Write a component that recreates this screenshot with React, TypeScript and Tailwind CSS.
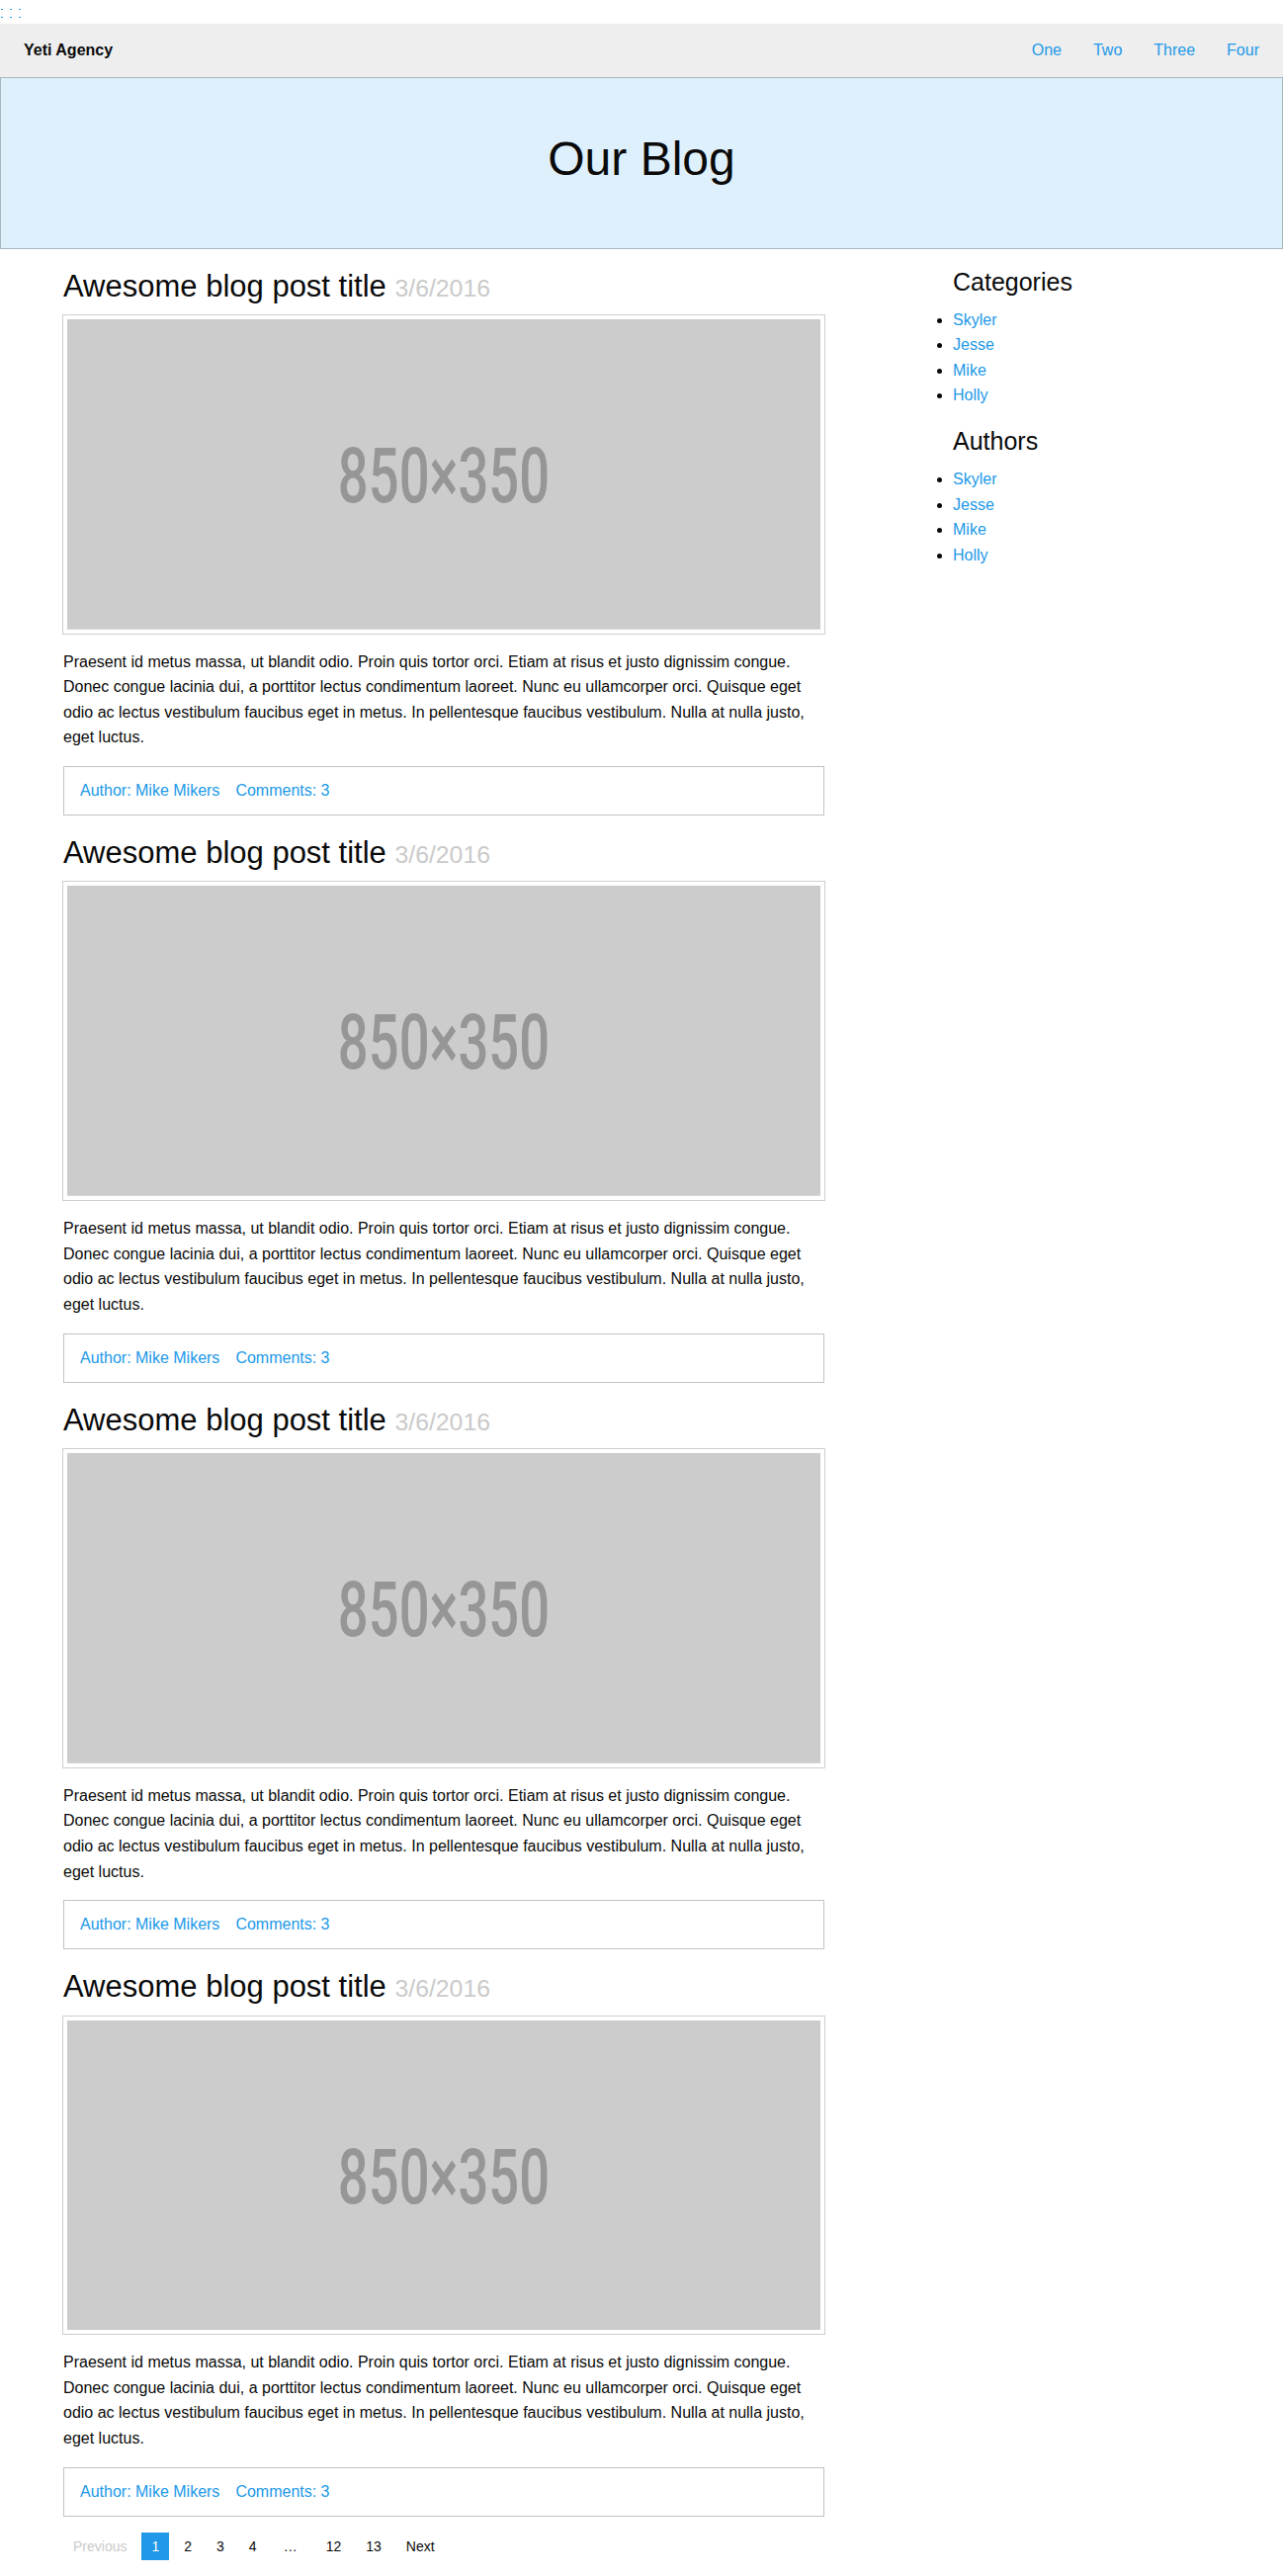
const navLinks = ['One', 'Two', 'Three', 'Four']
const people = ['Skyler', 'Jesse', 'Mike', 'Holly']
const pages = ['1', '2', '3', '4', '…', '12', '13']

function Placeholder() {
	return (
		<svg viewBox="0 0 850 350" className="block w-full h-auto">
			<rect width="850" height="350" fill="#cccccc" />
			<text
				x="425"
				y="206"
				textAnchor="middle"
				fontSize="87"
				fontFamily="Roboto, 'Liberation Sans', sans-serif"
				fontWeight="500"
				fill="#969696"
				textLength="239"
				lengthAdjust="spacingAndGlyphs"
			>
				850×350
			</text>
		</svg>
	)
}

function Post() {
	return (
		<article>
			<h3 className="text-[31px] leading-[1.4] mb-2 font-normal">
				Awesome blog post title{' '}
				<small className="text-[80%] leading-none text-[#cacaca]">3/6/2016</small>
			</h3>
			<div className="block border-4 border-white shadow-[0_0_0_1px_rgba(10,10,10,0.2)] mb-4">
				<Placeholder />
			</div>
			<p className="text-base leading-[1.6] mb-4">
				Praesent id metus massa, ut blandit odio. Proin quis tortor orci. Etiam at risus et justo dignissim
				congue. Donec congue lacinia dui, a porttitor lectus condimentum laoreet. Nunc eu ullamcorper orci.
				Quisque eget odio ac lectus vestibulum faucibus eget in metus. In pellentesque faucibus vestibulum.
				Nulla at nulla justo, eget luctus.
			</p>
			<div className="border border-[rgba(10,10,10,0.25)] p-4 mb-4">
				<ul className="flex leading-none">
					<li className="mr-4">
						<a className="text-[#2199e8]">Author: Mike Mikers</a>
					</li>
					<li className="mr-4">
						<a className="text-[#2199e8]">Comments: 3</a>
					</li>
				</ul>
			</div>
		</article>
	)
}

function SideList({ title }: { title: string }) {
	return (
		<div>
			<h4 className="text-[25px] leading-[1.4] mb-2">{title}</h4>
			<ul className="list-disc mb-4 leading-[1.6]">
				{people.map((p) => (
					<li key={p}>
						<a className="text-[#2199e8]">{p}</a>
					</li>
				))}
			</ul>
		</div>
	)
}

export default function App() {
	return (
		<div className="bg-white text-[#0a0a0a] font-['Liberation_Sans',Arial,sans-serif]">
			<div className="h-6 pt-[9px] pl-px flex flex-col gap-[7px]">
				{[0, 1].map((r) => (
					<div key={r} className="flex gap-[7px]">
						<span className="w-[2px] h-px bg-[#2199e8]" />
						<span className="w-[2px] h-px bg-[#2199e8]" />
						<span className="w-[2px] h-px bg-[#2199e8]" />
					</div>
				))}
			</div>

			<nav className="flex items-center justify-between bg-[#eeeeee] p-2">
				<span className="font-bold px-4 py-[0.7rem] leading-none">Yeti Agency</span>
				<ul className="flex">
					{navLinks.map((l) => (
						<li key={l}>
							<a className="block px-4 py-[0.7rem] leading-none text-[#2199e8]">{l}</a>
						</li>
					))}
				</ul>
			</nav>

			<div className="bg-[#def0fc] border border-[rgba(10,10,10,0.25)] py-12 mb-4">
				<h1 className="text-center text-[48px] leading-[1.4] mb-2">Our Blog</h1>
			</div>

			<div className="max-w-[1200px] mx-auto flex items-start">
				<div className="w-[800px] px-[15px]">
					<Post />
					<Post />
					<Post />
					<Post />
					<ul className="flex gap-[5px] text-[14px] leading-[22px] mb-4">
						<li className="px-[10px] py-[3px] text-[#cacaca]">Previous</li>
						{pages.map((p) => (
							<li
								key={p}
								className={
									p === '1'
										? 'px-[10px] py-[3px] bg-[#2199e8] text-white'
										: p === '…'
											? 'pl-[12px] pr-[14px] py-[3px]'
											: 'px-[10px] py-[3px]'
								}
							>
								{p}
							</li>
						))}
						<li className="px-[10px] py-[3px]">Next</li>
					</ul>
				</div>
				<aside className="w-[300px] ml-[100px] px-[15px]">
					<SideList title="Categories" />
					<SideList title="Authors" />
				</aside>
			</div>
		</div>
	)
}
